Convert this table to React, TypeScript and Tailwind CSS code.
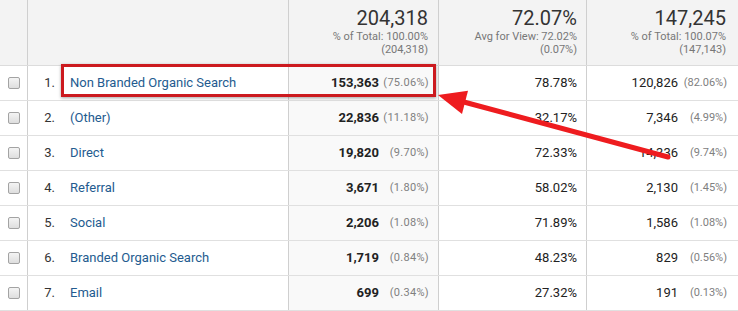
import React from "react";

type Row = {
  n: number;
  label: string;
  sessions: string;
  sPct: string;
  rate: string;
  conv: string;
  cPct: string;
};

const rows: Row[] = [
  { n: 1, label: "Non Branded Organic Search", sessions: "153,363", sPct: "(75.06%)", rate: "78.78%", conv: "120,826", cPct: "(82.06%)" },
  { n: 2, label: "(Other)", sessions: "22,836", sPct: "(11.18%)", rate: "32.17%", conv: "7,346", cPct: "(4.99%)" },
  { n: 3, label: "Direct", sessions: "19,820", sPct: "(9.70%)", rate: "72.33%", conv: "14,336", cPct: "(9.74%)" },
  { n: 4, label: "Referral", sessions: "3,671", sPct: "(1.80%)", rate: "58.02%", conv: "2,130", cPct: "(1.45%)" },
  { n: 5, label: "Social", sessions: "2,206", sPct: "(1.08%)", rate: "71.89%", conv: "1,586", cPct: "(1.08%)" },
  { n: 6, label: "Branded Organic Search", sessions: "1,719", sPct: "(0.84%)", rate: "48.23%", conv: "829", cPct: "(0.56%)" },
  { n: 7, label: "Email", sessions: "699", sPct: "(0.34%)", rate: "27.32%", conv: "191", cPct: "(0.13%)" },
];

function Checkbox() {
  return (
    <div className="w-[12px] h-[12px] rounded-[2px] border border-[#a3a3a3] bg-gradient-to-b from-[#f4f4f4] to-[#dedede]" />
  );
}

function HeaderCell({ big, l1, l2, w, pr }: { big: string; l1: string; l2: string; w: string; pr: string }) {
  return (
    <div className={`${w} ${pr} h-full flex flex-col items-end pt-[6px] border-r border-[#cfcfcf]`}>
      <div className="text-[20px] leading-[24px] text-[#333]">{big}</div>
      <div className="text-[11px] leading-[13px] text-[#777]">{l1}</div>
      <div className="text-[11px] leading-[13px] text-[#777]">{l2}</div>
    </div>
  );
}

export default function App() {
  return (
    <div className="relative w-[738px] h-[311px] bg-white overflow-hidden font-[Roboto,sans-serif]">
      {/* header */}
      <div className="flex h-[66px] border-b border-[#dcdcdc] bg-[#f3f3f3]">
        <div className="w-[28px] h-full border-r border-[#cfcfcf]" />
        <div className="w-[261px] h-full border-r border-[#cfcfcf]" />
        <HeaderCell w="w-[150px]" pr="pr-[10px]" big="204,318" l1="% of Total: 100.00%" l2="(204,318)" />
        <HeaderCell w="w-[148px]" pr="pr-[9px]" big="72.07%" l1="Avg for View: 72.02%" l2="(0.07%)" />
        <div className="w-[151px] h-full flex flex-col items-end pt-[6px] pr-[12px]">
          <div className="text-[20px] leading-[24px] text-[#333]">147,245</div>
          <div className="text-[11px] leading-[13px] text-[#777]">% of Total: 100.07%</div>
          <div className="text-[11px] leading-[13px] text-[#777]">(147,143)</div>
        </div>
      </div>

      {/* rows */}
      {rows.map((r) => (
        <div key={r.n} className="flex h-[35px] border-b border-[#e0e0e0] text-[13px] text-[#222]">
          <div className="w-[28px] h-full border-r border-[#cfcfcf] flex items-center justify-center">
            <Checkbox />
          </div>
          <div className="w-[261px] h-full border-r border-[#cfcfcf] flex items-center">
            <span className="w-[27px] text-right text-[#333]">{r.n}.</span>
            <span className="ml-[15px] text-[#235b8f]">{r.label}</span>
          </div>
          <div className="w-[150px] h-full border-r border-[#cfcfcf] bg-[#f9f9f9] flex items-center justify-end pr-[9px]">
            <span className="font-bold text-[#222]">{r.sessions}</span>
            <span className="w-[50px] text-right text-[11px] text-[#808080] tracking-[0.3px]">{r.sPct}</span>
          </div>
          <div className="w-[148px] h-full border-r border-[#cfcfcf] flex items-center justify-end pr-[9px]">
            <span>{r.rate}</span>
          </div>
          <div className="w-[151px] h-full flex items-center justify-end pr-[11px]">
            <span>{r.conv}</span>
            <span className="w-[49px] text-right text-[11px] text-[#808080]">{r.cPct}</span>
          </div>
        </div>
      ))}

      {/* annotation box */}
      <div className="absolute left-[61px] top-[64px] w-[375px] h-[33px] border-[3px] border-[#cc1a1f] shadow-[0_1px_3px_rgba(0,0,0,0.35)]" />

      {/* arrow */}
      <svg className="absolute left-0 top-0 pointer-events-none" width="738" height="311" viewBox="0 0 738 311">
        <line x1="668" y1="157" x2="462" y2="101.5" stroke="#ee1c1f" strokeWidth="5" strokeLinecap="round" />
        <polygon points="438,95 468,90.7 462,113.9" fill="#ee1c1f" />
      </svg>
    </div>
  );
}
